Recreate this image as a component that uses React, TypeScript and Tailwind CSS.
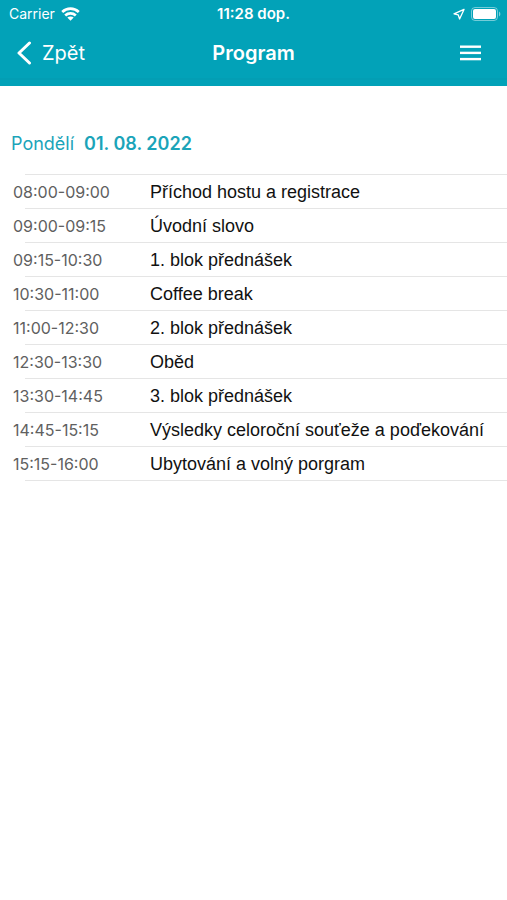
const SCHEDULE = [
  { time: '08:00-09:00', title: 'Příchod hostu a registrace' },
  { time: '09:00-09:15', title: 'Úvodní slovo' },
  { time: '09:15-10:30', title: '1. blok přednášek' },
  { time: '10:30-11:00', title: 'Coffee break' },
  { time: '11:00-12:30', title: '2. blok přednášek' },
  { time: '12:30-13:30', title: 'Oběd' },
  { time: '13:30-14:45', title: '3. blok přednášek' },
  { time: '14:45-15:15', title: 'Výsledky celoroční souťeže a poďekování' },
  { time: '15:15-16:00', title: 'Ubytování a volný porgram' },
]

function WifiIcon() {
  return (
    <svg width="19" height="14" viewBox="0 0 19 14" fill="none" stroke="currentColor" strokeWidth="2.7">
      <path d="M1.2 5C6 0.6 13 0.6 17.8 5" />
      <path d="M4.2 8.4C7.2 5.6 11.8 5.6 14.8 8.4" />
      <path d="M9.5 13.8L6.3 10.6C8.1 9 10.9 9 12.7 10.6Z" fill="currentColor" stroke="none" />
    </svg>
  )
}

function LocationIcon() {
  return (
    <svg width="12" height="12" viewBox="0 0 12 12" fill="none" stroke="currentColor" strokeWidth="1.3" strokeLinejoin="round">
      <path d="M11 1.4L1 5.8L5.2 6.8L6.6 11Z" />
    </svg>
  )
}

function BatteryIcon() {
  return (
    <svg width="30" height="14" viewBox="0 0 30 14" fill="none">
      <rect x="0.5" y="0.5" width="26" height="13" rx="3.5" stroke="currentColor" strokeOpacity="0.45" />
      <rect x="2" y="2" width="23" height="10" rx="2" fill="currentColor" />
      <path d="M28 4.5C29.8 5.3 29.8 8.7 28 9.5Z" fill="currentColor" fillOpacity="0.5" />
    </svg>
  )
}

function StatusBar() {
  return (
    <div className="grid h-7 grid-cols-3 items-center px-1.5 text-sm">
      <div className="flex items-center gap-1.5 pl-[3px]">
        <span>Carrier</span>
        <WifiIcon />
      </div>
      <span className="text-center text-[15px] font-semibold">11:28 dop.</span>
      <div className="flex items-center justify-end gap-1.5">
        <LocationIcon />
        <BatteryIcon />
      </div>
    </div>
  )
}

function NavBar() {
  return (
    <nav className="grid h-[50px] grid-cols-3 items-center px-4 text-xl">
      <button type="button" className="flex items-center gap-2.5 justify-self-start">
        <svg width="16" height="24" viewBox="0 0 16 24" fill="none" stroke="currentColor" strokeWidth="3" strokeLinecap="round" strokeLinejoin="round">
          <path d="M13.5 2L3 12L13.5 22" />
        </svg>
        Zpět
      </button>
      <h1 className="text-center font-semibold">Program</h1>
      <button type="button" aria-label="Menu" className="justify-self-end pr-2.5">
        <svg width="21" height="16" viewBox="0 0 21 16" fill="currentColor">
          <rect y="0.5" width="21" height="2.4" />
          <rect y="6.7" width="21" height="2.4" />
          <rect y="12.9" width="21" height="2.4" />
        </svg>
      </button>
    </nav>
  )
}

export default function App() {
  return (
    <div className="min-h-screen bg-white font-['Inter',sans-serif]">
      <header className="bg-[#02a2b8] text-white">
        <StatusBar />
        <NavBar />
        <div className="h-2 border-t-2 border-[#039eb4]" />
      </header>

      <main className="pt-11">
        <h2 className="flex gap-2.5 pl-[11px] text-lg text-[#1ba4b9]">
          <span>Pondělí</span>
          <span className="font-semibold">01. 08. 2022</span>
        </h2>

        {/* Rules start inset, the times hang out to the left of them */}
        <div className="mt-4 pl-[25px]">
          <table className="w-full border-collapse border-t border-[#e5e5e5] text-left">
            <tbody>
              {SCHEDULE.map((item) => (
                <tr key={item.time} className="h-[34px] border-b border-[#e5e5e5]">
                  <th scope="row" className="w-[125px] p-0 text-base font-normal text-[#606060]">
                    <span className="-ml-3">{item.time}</span>
                  </th>
                  <td className="p-0 font-['Liberation_Sans',Arial,sans-serif] text-lg whitespace-nowrap text-[#111]">
                    {item.title}
                  </td>
                </tr>
              ))}
            </tbody>
          </table>
        </div>
      </main>
    </div>
  )
}
